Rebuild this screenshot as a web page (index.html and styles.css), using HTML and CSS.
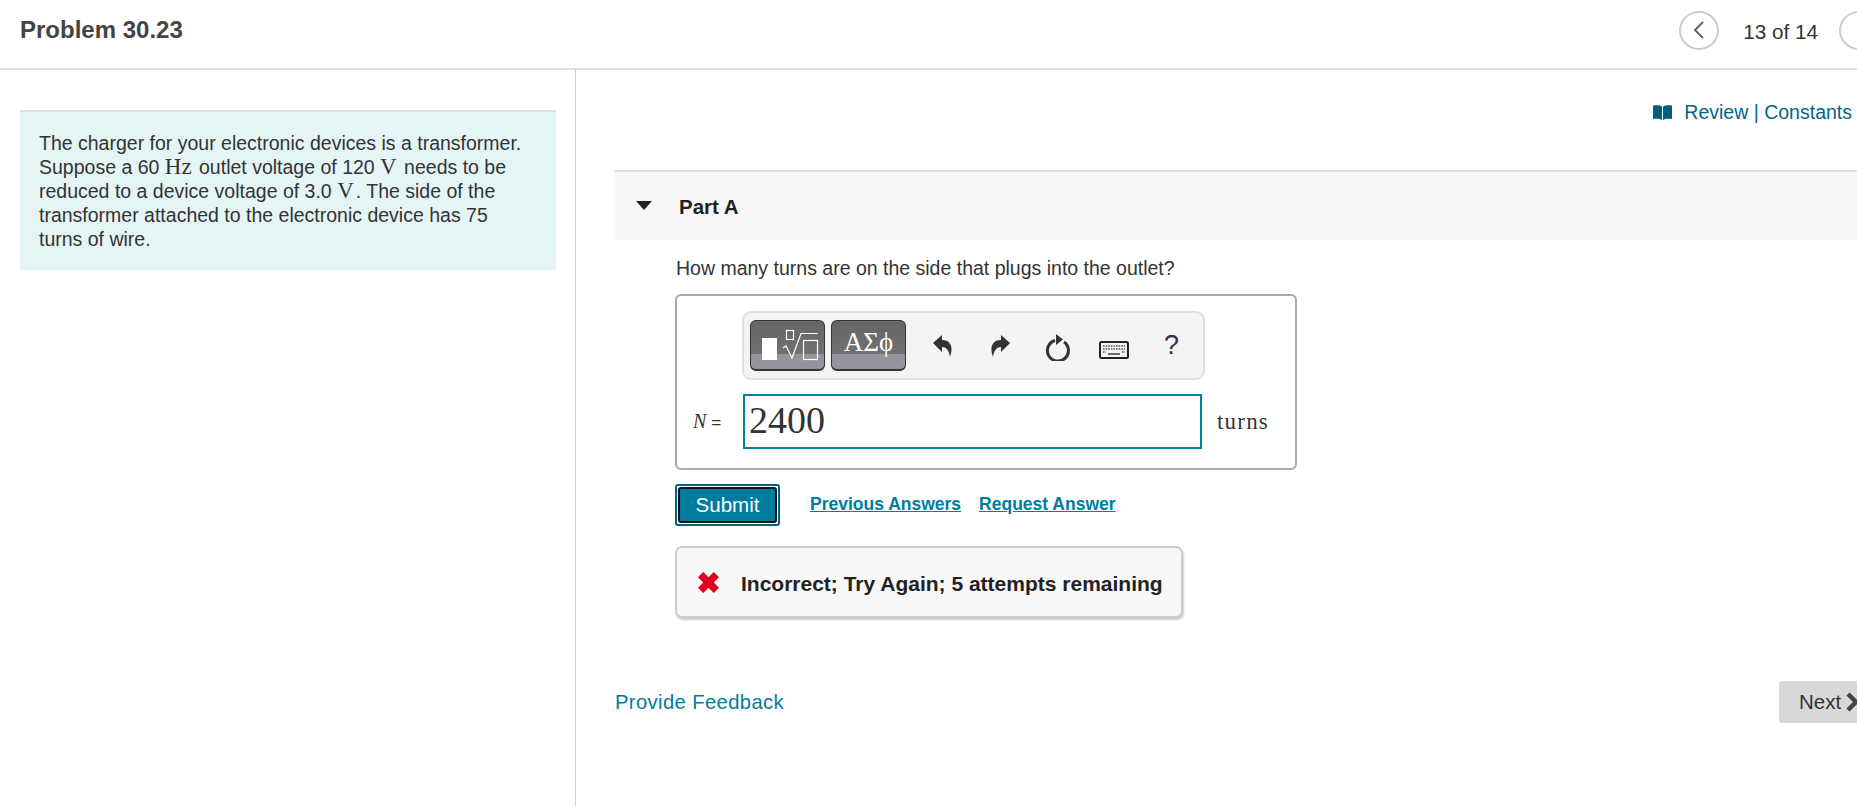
FILE: index.html
```html
<!DOCTYPE html>
<html lang="en">
<head>
<meta charset="utf-8">
<title>Problem 30.23</title>
<link rel="stylesheet" href="styles.css">
</head>
<body>
<header class="topbar">
  <h1 class="title">Problem 30.23</h1>
  <nav class="pager">
    <span class="circle"><svg width="14" height="22" viewBox="0 0 14 22"><path d="M11 3 L3 11 L11 19" class="chev"/></svg></span>
    <span class="count">13 of 14</span>
    <span class="circle"><svg class="chev-next" width="14" height="22" viewBox="0 0 14 22"><path d="M3 3 L11 11 L3 19" class="chev"/></svg></span>
  </nav>
</header>
<main class="layout">
  <aside class="left">
    <div class="intro">
      The charger for your electronic devices is a transformer.<br>
      Suppose a 60 <span class="math">Hz</span> outlet voltage of 120 <span class="math">V</span> needs to be<br>
      reduced to a device voltage of 3.0 <span class="math">V</span>. The side of the<br>
      transformer attached to the electronic device has 75<br>
      turns of wire.
    </div>
  </aside>
  <section class="right">
    <div class="review">
      <svg class="book" width="19" height="15" viewBox="0 0 19 15"><path d="M0 0.5 C3 0 7 0 9 1.5 V15 C7 13.5 3 13.5 0 14 Z M10 1.5 C12 0 16 0 19 0.5 V14 C16 13.5 12 13.5 10 15 Z"/></svg>
      <span>Review | Constants</span>
    </div>
    <div class="part">
      <span class="caret"></span>
      <span class="part-name">Part A</span>
    </div>
    <p class="question">How many turns are on the side that plugs into the outlet?</p>
    <div class="answer">
      <div class="toolbar">
        <span class="tbtn tbtn-templates">
          <svg width="75" height="51" viewBox="0 0 75 51">
            <rect x="12" y="18" width="15" height="22" fill="#fff"/>
            <rect x="36.5" y="10.5" width="7" height="9" class="outline"/>
            <path d="M33 28 L36 26 L42 38 L51 13.5 H67.5" class="outline"/>
            <rect x="53.5" y="20.5" width="14" height="19" class="outline"/>
          </svg>
        </span>
        <span class="tbtn tbtn-greek">ΑΣϕ</span>
        <svg class="ticon ticon-undo" width="22" height="24" viewBox="0 0 22 24"><path d="M1 9 L10 1 V6 C18 6 22 12 18 23 C17 16 14 13 10 13 V18 Z"/></svg>
        <svg class="ticon ticon-redo" width="22" height="24" viewBox="0 0 22 24"><path d="M21 9 L12 1 V6 C4 6 0 12 4 23 C5 16 8 13 12 13 V18 Z"/></svg>
        <svg class="ticon ticon-reload" width="26" height="28" viewBox="0 0 26 28"><path d="M19 9 A10.5 10.5 0 1 1 10 7.5" class="ring"/><path d="M11 1 L18 6.5 L11 12 Z"/></svg>
        <svg class="ticon ticon-keys" width="30" height="18" viewBox="0 0 30 18"><rect x="1" y="1" width="28" height="16" rx="1.5" class="keys-frame"/><path d="M4 5 H26 M4 8 H26 M4 11 H7 M23 11 H26" class="keys-dots"/><path d="M9 13 H21" class="keys-bar"/></svg>
        <span class="thelp">?</span>
      </div>
      <div class="entry">
        <span class="label"><i>N</i> <span class="eq">=</span></span>
        <span class="input">2400</span>
        <span class="unit">turns</span>
      </div>
    </div>
    <div class="actions">
      <span class="submit"><span class="submit-inner">Submit</span></span>
      <a class="link link-prev" href="#">Previous Answers</a>
      <a class="link" href="#">Request Answer</a>
    </div>
    <div class="feedback">
      <svg width="21" height="21" viewBox="2 2 16 16"><path d="M2 6 L6 2 L10 6 L14 2 L18 6 L14 10 L18 14 L14 18 L10 14 L6 18 L2 14 L6 10 Z" fill="#e0001b"/></svg>
      <span class="feedback-text">Incorrect; Try Again; 5 attempts remaining</span>
    </div>
    <div class="footer">
      <a class="provide" href="#">Provide Feedback</a>
      <span class="next">Next <svg width="16" height="22" viewBox="0 0 16 22"><path d="M3 3 L11 11 L3 19" class="next-chev"/></svg></span>
    </div>
  </section>
</main>
</body>
</html>
```

FILE: styles.css
```css
* { box-sizing: border-box; }
html, body { margin: 0; height: 100%; }
body {
  font-family: "Liberation Sans", Arial, sans-serif;
  color: #333;
  background: #fff;
  overflow: hidden;
  display: flex;
  flex-direction: column;
  height: 806px;
}
.topbar {
  height: 70px;
  flex: none;
  border-bottom: 2px solid #ddd;
  display: flex;
  align-items: center;
  justify-content: space-between;
  padding-left: 20px;
  overflow: hidden;
}
.title {
  margin: 0 0 9px;
  font-size: 24px;
  font-weight: 700;
  color: #444;
}
.pager {
  display: flex;
  align-items: center;
  margin-right: -22px;
  margin-bottom: 8px;
  flex: none;
}
.circle {
  width: 40px;
  height: 39px;
  border: 2px solid #ccc;
  border-radius: 50%;
  display: flex;
  align-items: center;
  justify-content: center;
}
.chev { fill: none; stroke: #5b6672; stroke-width: 2; }
.chev-next { margin-left: 6px; }
.count {
  margin: 3px 21px 0 24px;
  font-size: 20.7px;
  color: #333;
  white-space: nowrap;
}
.layout { flex: 1; display: flex; min-height: 0; }
.left {
  width: 576px;
  flex: none;
  border-right: 1px solid #c3d0e3;
  padding: 40px 19px 0 20px;
}
.intro {
  height: 160px;
  background: #e5f5f6;
  border-top: 2px solid #ddd;
  padding: 19px 0 0 19px;
  font-size: 19.5px;
  line-height: 24px;
  white-space: nowrap;
}
.math {
  font-family: "Liberation Serif", serif;
  font-size: 23px;
  line-height: 1;
  padding-right: 2px;
}
.right { flex: 1; min-width: 0; }
.review {
  margin-top: 31px;
  height: 22px;
  padding-right: 5px;
  display: flex;
  align-items: center;
  justify-content: flex-end;
  gap: 12px;
  font-size: 19.5px;
  color: #00667f;
  white-space: nowrap;
}
.book { fill: #00607a; }
.part {
  margin-top: 47px;
  margin-left: 39px;
  height: 70px;
  border-top: 2px solid #ddd;
  background: #f8f8f8;
  display: flex;
  align-items: center;
  padding-left: 21px;
  padding-top: 1px;
}
.caret {
  width: 0;
  height: 0;
  border-left: 8px solid transparent;
  border-right: 8px solid transparent;
  border-top: 9px solid #222;
  margin-bottom: 2px;
}
.part-name {
  margin: 1px 0 0 27px;
  font-size: 20.5px;
  font-weight: 700;
  color: #222;
}
.question {
  margin: 17px 0 0 100px;
  font-size: 19.5px;
  line-height: 22px;
}
.answer {
  margin: 15px 0 0 99px;
  width: 622px;
  height: 176px;
  border: 2px solid #aaa;
  border-radius: 6px;
}
.toolbar {
  margin: 15px 0 0 65px;
  width: 463px;
  height: 69px;
  background: #f4f4f4;
  border: 2px solid #e0e0e0;
  border-radius: 9px;
  display: flex;
  align-items: center;
  padding: 0 0 0 6px;
}
.tbtn {
  width: 75px;
  height: 51px;
  border-radius: 6px;
  border: 1px solid #333;
  border-bottom-width: 2px;
  background: linear-gradient(#666 0, #707070 68%, #94949e 68%, #94949e 100%);
  color: #fff;
  display: flex;
  align-items: center;
  justify-content: center;
  overflow: hidden;
}
.tbtn svg { flex: none; }
.tbtn-greek {
  margin-left: 6px;
  font-family: "Liberation Serif", serif;
  font-size: 27px;
  padding-bottom: 6px;
}
.outline { fill: none; stroke: #fff; stroke-width: 1.2; }
.ticon { fill: #333; flex: none; }
.ticon-undo { margin-left: 26px; }
.ticon-redo { margin-left: 35px; }
.ticon-reload { margin-left: 34px; margin-top: 2px; }
.ticon-keys { margin-left: 28px; margin-top: 8px; }
.ring { fill: none; stroke: #333; stroke-width: 3; }
.keys-frame { fill: #f4f4f4; stroke: #222; stroke-width: 2; }
.keys-dots { fill: none; stroke: #555; stroke-width: 1.6; stroke-dasharray: 1.6 1; }
.keys-bar { fill: none; stroke: #444; stroke-width: 1.6; }
.thelp { margin-left: 35px; font-size: 27px; color: #333; }
.entry {
  margin-top: 14px;
  display: flex;
  align-items: center;
  height: 55px;
}
.label {
  width: 66px;
  padding-left: 16px;
  font-family: "Liberation Serif", serif;
  font-size: 20px;
}
.eq { font-family: "Liberation Sans", sans-serif; font-size: 17px; }
.input {
  width: 459px;
  height: 55px;
  border: 2px solid #00809f;
  padding: 0 0 0 4px;
  font-family: "Liberation Serif", serif;
  font-size: 38px;
  line-height: 48px;
}
.unit {
  margin-left: 15px;
  font-family: "Liberation Serif", serif;
  font-size: 23px;
  letter-spacing: 1.2px;
}
.actions {
  margin: 14px 0 0 99px;
  display: flex;
  align-items: center;
  height: 42px;
}
.submit {
  width: 105px;
  height: 42px;
  border: 2px solid #00667f;
  border-radius: 3px;
  padding: 1px;
  background: #fff;
  display: flex;
}
.submit-inner {
  flex: 1;
  border: 2px solid #111;
  border-radius: 3px;
  background: #007c9e;
  color: #fff;
  font-size: 20.5px;
  display: flex;
  align-items: center;
  justify-content: center;
}
.link {
  color: #007c9e;
  font-size: 17.5px;
  font-weight: 700;
  margin: 0 0 2px 18px;
}
.link-prev { margin-left: 30px; }
.feedback {
  margin: 20px 0 0 99px;
  width: 508px;
  height: 72px;
  border: 2px solid #ccc;
  border-radius: 7px;
  background: #f8f8f8;
  box-shadow: 1px 2px 2px #ccc;
  display: flex;
  align-items: center;
  padding-left: 21px;
  gap: 22px;
  font-size: 21px;
  font-weight: 700;
  color: #222;
  white-space: nowrap;
}
.feedback-text { margin-top: 4px; }
.footer {
  margin: 63px 0 0 39px;
  display: flex;
  align-items: center;
  justify-content: space-between;
}
.provide {
  color: #007c9e;
  font-size: 20.2px;
  text-decoration: none;
  letter-spacing: 0.4px;
  margin-top: 1px;
}
.next {
  width: 78px;
  height: 42px;
  flex: none;
  background: #d8d8d8;
  border-radius: 3px 0 0 3px;
  padding-left: 20px;
  display: flex;
  align-items: center;
  gap: 4px;
  font-size: 20.5px;
  color: #333;
  white-space: nowrap;
  overflow: hidden;
}
.next svg { flex: none; }
.next-chev { fill: none; stroke: #444; stroke-width: 4.5; }
```
